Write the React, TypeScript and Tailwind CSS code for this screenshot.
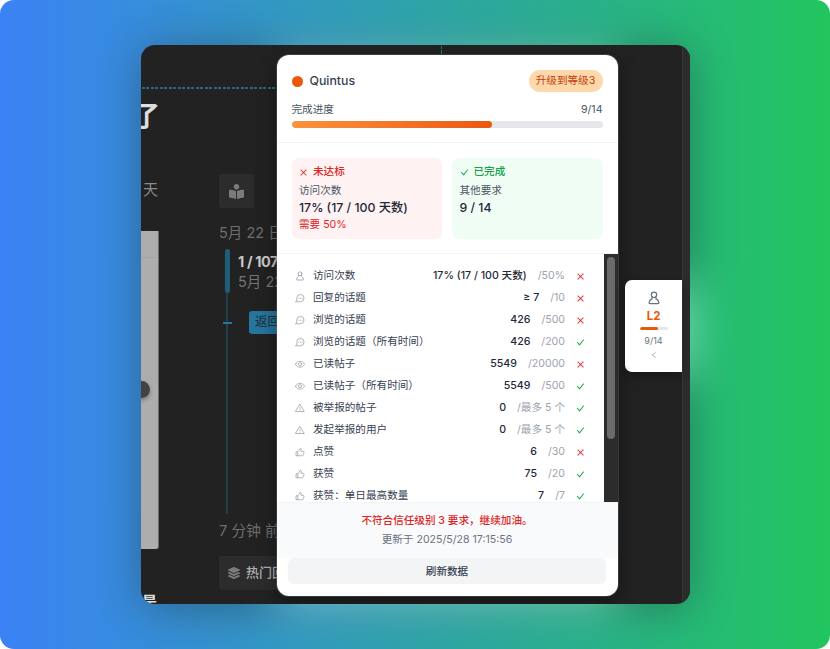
import React from "react";
import { AiOutlineClose, AiOutlineCheck, AiOutlineLeft } from "react-icons/ai";
import { FaBookReader, FaLayerGroup } from "react-icons/fa";

type Kind = "user" | "chat" | "eye" | "warn" | "like";

function Glyph({ kind, className }: { kind: Kind; className: string }) {
  return (
    <svg viewBox="0 0 20 20" className={className} fill="none" stroke="currentColor" strokeWidth={kind === "user" ? 1.8 : 1.6} strokeLinecap="round" strokeLinejoin="round">
      {kind === "user" && (
        <>
          <circle cx="10" cy="5.500" r="3.800" />
          <path d="M7.500 8.800L7 11.300C4.800 12.200 3.500 14 3 16.500Q2.800 18 4.500 18H15.500Q17.200 18 17 16.500C16.500 14 15.200 12.200 13 11.300L12.500 8.800" />
        </>
      )}
      {kind === "chat" && (
        <>
          <path d="M1.500 17.500H11A7.300 7.300 0 1 0 3.500 10.500V15Z" />
          <path d="M7.500 10.500h.1M10.800 10.500h.1M14.100 10.500h.1" strokeWidth="2" />
        </>
      )}
      {kind === "eye" && (
        <>
          <path d="M1 10.500C4.500 2.500 15.500 2.500 19 10.500C15.500 18.500 4.500 18.500 1 10.500Z" />
          <circle cx="10" cy="10.500" r="3.200" />
        </>
      )}
      {kind === "warn" && (
        <>
          <path d="M10 3L18.500 17H1.500Z" />
          <path d="M10 8.500v4M10 14.600v.2" strokeWidth="1.200" />
        </>
      )}
      {kind === "like" && (
        <path d="M5.500 17.500H2V9.500H5.500V17.500H14.500Q16.300 17.500 16.800 15.500L18 10.500Q18.300 8.500 16.300 8.500H12L12.500 5Q12.500 2.500 10.500 2.500Q9 7 5.500 9.500" />
      )}
    </svg>
  );
}

const rows: { kind: Kind; name: string; value: string; goal: string; ok: boolean }[] = [
  { kind: "user", name: "访问次数", value: "17% (17 / 100 天数)", goal: "/50%", ok: false },
  { kind: "chat", name: "回复的话题", value: "≥ 7", goal: "/10", ok: false },
  { kind: "chat", name: "浏览的话题", value: "426", goal: "/500", ok: false },
  { kind: "chat", name: "浏览的话题（所有时间）", value: "426", goal: "/200", ok: true },
  { kind: "eye", name: "已读帖子", value: "5549", goal: "/20000", ok: false },
  { kind: "eye", name: "已读帖子（所有时间）", value: "5549", goal: "/500", ok: true },
  { kind: "warn", name: "被举报的帖子", value: "0", goal: "/最多 5 个", ok: true },
  { kind: "warn", name: "发起举报的用户", value: "0", goal: "/最多 5 个", ok: true },
  { kind: "like", name: "点赞", value: "6", goal: "/30", ok: false },
  { kind: "like", name: "获赞", value: "75", goal: "/20", ok: true },
  { kind: "like", name: "获赞：单日最高数量", value: "7", goal: "/7", ok: true },
];

function Topic() {
  return (
    <div className="flex h-full w-[136px] flex-col overflow-hidden whitespace-nowrap">
      <div className="mt-[42px] ml-[1px] h-[2px] shrink-0 bg-[repeating-linear-gradient(to_right,#2a6583_0_3px,#222_3px_4.5px)]" />
      <div className="flex min-h-0 flex-1">
        <div className="flex w-[78px] shrink-0 flex-col">
          <div className="mt-[10px] -ml-[8px] h-[36px] shrink-0 text-[27px] leading-[36px] font-bold text-[#dedede]">了</div>
          <div className="mt-[45px] ml-[2px] h-[20px] shrink-0 text-[15px] leading-[20px] text-[#8a8a8a]">天</div>
          <div className="mt-[31px] h-[318px] w-[18px] shrink-0 overflow-hidden rounded-br-[3px] border-r border-[#6c6c6c] bg-[#adadad]">
            <div className="h-[27px] border-b border-[#a3a3a3]" />
            <div className="mt-[123px] -ml-[9px] h-[17px] w-[18px] rounded-full bg-[#424242] shadow-[0_2px_4px_#0005]" />
          </div>
          <div className="mt-[43px] ml-[1px] h-[20px] shrink-0 text-[15px] leading-[20px] font-bold text-[#dedede]">是</div>
        </div>
        <div className="flex w-[160px] shrink-0 flex-col">
          <div className="mt-[85px] flex h-[34px] w-[35px] items-center justify-center rounded-[3px] bg-[#2c2c2c] text-[#7b7b7b]">
            <FaBookReader className="h-[15px] w-[15px]" />
          </div>
          <div className="mt-[14px] h-[20px] text-[14.500px] leading-[21px] text-[#6e6e6e]">5月 22 日</div>
          <div className="mt-[7px] flex h-[265px]">
            <div className="flex w-[19px] flex-col items-start">
              <div className="ml-[6px] h-[44px] w-[5px] rounded-full bg-[#205d78]" />
              <div className="ml-[7px] h-[29px] w-[2px] bg-[#213d4a]" />
              <div className="ml-[4px] h-[2px] w-[9px] bg-[#2378a0]" />
              <div className="ml-[7px] w-[2px] flex-1 bg-[#213d4a]" />
            </div>
            <div>
              <div className="mt-[3px] h-[20px] text-[14.500px] leading-[20px] font-bold tracking-[-0.4px] text-[#c9c9c9]">1 / 107</div>
              <div className="h-[20px] text-[14.500px] leading-[19px] text-[#747474]">5月 22 日</div>
              <div className="mt-[19px] ml-[11px] flex h-[23px] w-[60px] items-center rounded-[3px] bg-[#27759c] pl-[6px] text-[12.500px] text-[#182c37]">返回</div>
            </div>
          </div>
          <div className="mt-[7px] h-[20px] text-[14.700px] leading-[21px] text-[#6e6e6e]">7 分钟 前</div>
          <div className="mt-[15px] flex h-[34px] items-center gap-[6px] rounded-[3px] bg-[#2c2c2c] pl-[9px] text-[13px] font-medium text-[#b0b0b0]">
            <FaLayerGroup className="h-[12px] w-[12px] text-[#7b7b7b]" />
            <span>热门回复</span>
          </div>
        </div>
      </div>
    </div>
  );
}

function Panel() {
  return (
    <section className="absolute top-[10px] left-[135.500px] flex h-[541px] w-[341px] flex-col overflow-hidden rounded-[12px] bg-white text-[10.600px] text-[#4b5563] shadow-[0_8px_20px_#0006] ring-1 ring-[#77777755]">
      <header className="h-[88px] shrink-0 border-b border-[#f3f4f6] px-[15px] pt-[15px]">
        <div className="flex h-[22px] items-center">
          <i className="mt-[1px] h-[11px] w-[11px] rounded-full bg-[#ea580c]" />
          <span className="mt-[1px] ml-[7px] text-[12.300px] font-medium text-[#374151]">Quintus</span>
          <span className="ml-auto flex h-[22px] w-[74px] items-center justify-center rounded-full bg-[#fed7aa] pb-[1px] text-[#c2410c]">升级到等级3</span>
        </div>
        <div className="mt-[10px] flex h-[15px] items-center justify-between">
          <span>完成进度</span>
          <span>9/14</span>
        </div>
        <div className="mt-[4px] h-[7px] overflow-hidden rounded-full bg-[#e5e7eb]">
          <div className="h-full w-[200px] rounded-full bg-linear-to-r from-[#fb923c] to-[#ea580c]" />
        </div>
      </header>

      <div className="flex h-[111px] shrink-0 gap-[10px] border-b border-[#f3f4f6] p-[15px] pb-[14px]">
        <div className="flex-1 rounded-[7px] bg-[#fef2f2] px-[7.500px] pt-[5px]">
          <div className="flex h-[17px] items-center gap-[5px] font-medium text-[#dc2626]">
            <AiOutlineClose strokeWidth={20} className="mt-[1px] h-[9px] w-[9px]" />
            <span>未达标</span>
          </div>
          <div className="mt-[2px] h-[16px] leading-[18px]">访问次数</div>
          <div className="h-[18px] text-[12.300px] leading-[19px] font-medium text-[#1f2937]">17% (17 / 100 天数)</div>
          <div className="h-[15px] leading-[17px] text-[#dc2626]">需要 50%</div>
        </div>
        <div className="flex-1 rounded-[7px] bg-[#f0fdf4] px-[7.500px] pt-[5px]">
          <div className="flex h-[17px] items-center gap-[5px] font-medium text-[#16a34a]">
            <AiOutlineCheck strokeWidth={20} className="mt-[1px] h-[9px] w-[9px]" />
            <span>已完成</span>
          </div>
          <div className="mt-[2px] h-[16px] leading-[18px]">其他要求</div>
          <div className="h-[18px] text-[12.300px] leading-[19px] font-medium text-[#1f2937]">9 / 14</div>
        </div>
      </div>

      <div className="flex h-[248px] shrink-0 overflow-hidden">
        <div className="flex-1 pt-[11px] pr-[18.500px] pl-[18.500px]">
          {rows.map((r) => (
            <div key={r.name} className="flex h-[22px] items-center">
              <Glyph kind={r.kind} className="h-[10px] w-[10px] text-[#9ca3af]" />
              <span className="ml-[8px] text-[#374151]">{r.name}</span>
              <span className="ml-auto font-medium text-[#1f2937]">{r.value}</span>
              <span className="ml-[11px] text-[#9ca3af]">{r.goal}</span>
              {r.ok ? (
                <AiOutlineCheck strokeWidth={30} className="ml-[11px] h-[9px] w-[9px] text-[#16a34a]" />
              ) : (
                <AiOutlineClose strokeWidth={30} className="ml-[11px] h-[9px] w-[9px] text-[#dc2626]" />
              )}
            </div>
          ))}
        </div>
        <div className="w-[14px] bg-[#2c2c2c] pt-[3px] pl-[3px]">
          <div className="h-[182px] w-[8px] rounded-full bg-[#6b6b6b]" />
        </div>
      </div>

      <div className="h-[56px] shrink-0 border-t border-[#f3f4f6] bg-[#f9fafb] pt-[8px] text-center">
        <div className="h-[19px] leading-[20px] font-medium text-[#dc2626]">不符合信任级别 3 要求，继续加油。</div>
        <div className="h-[18px] leading-[19px] text-[#6b7280]">更新于 2025/5/28 17:15:56</div>
      </div>
      <button className="mx-[11.500px] h-[26px] shrink-0 rounded-[6px] bg-[#f3f4f6] pt-[1px] text-[10.600px] font-medium text-[#374151]">刷新数据</button>
    </section>
  );
}

export default function App() {
  return (
    <div className="h-[649px] w-[830px] bg-white font-['Inter','Noto_Sans_CJK_SC',sans-serif]">
      <main className="relative h-full w-full overflow-hidden rounded-[14px] bg-[linear-gradient(to_right,#3b82f6,#22c55e)] px-[140px] pt-[45px]">
        <div className="absolute top-[49px] left-[141px] h-[559px] w-[549px] opacity-40 blur-[23px]">
          <div className="h-full w-full overflow-hidden rounded-[14px] bg-[#222]">
            <div className="mt-[10px] ml-[135px] h-[541px] w-[342px] bg-white" />
          </div>
          <div className="absolute top-[235px] right-0 h-[92px] w-[65px] bg-white" />
        </div>
        <div className="relative ml-[1px] h-[559px] w-[549px] overflow-hidden rounded-[14px] bg-[#222]">
          <Topic />
          <div className="absolute top-[1px] left-[300px] h-[9px] w-[1px] bg-[repeating-linear-gradient(to_bottom,#2a7193_0_3px,#222_3px_4.5px)]" />
          <div className="absolute top-0 right-0 h-full w-[8px] border-l border-[#363636] bg-[#2c2c2c]" />
          <Panel />
          <aside className="absolute top-[235px] right-[8px] flex h-[92px] w-[57px] flex-col items-center rounded-l-[7px] bg-white pt-[11px] shadow-[0_4px_10px_#0005]">
            <Glyph kind="user" className="h-[14px] w-[14px] text-[#6b7280]" />
            <div className="mt-[4px] h-[15px] text-[11.500px] leading-[15px] font-bold text-[#ea580c]">L2</div>
            <div className="mt-[3px] h-[3px] w-[28px] overflow-hidden rounded-full bg-[#e5e7eb]">
              <div className="h-full w-[18px] rounded-full bg-[#ea580c]" />
            </div>
            <div className="mt-[4px] h-[14px] text-[9px] leading-[14px] text-[#6b7280]">9/14</div>
            <AiOutlineLeft className="mt-[3px] h-[8px] w-[8px] text-[#9ca3af]" />
          </aside>
        </div>
      </main>
    </div>
  );
}
